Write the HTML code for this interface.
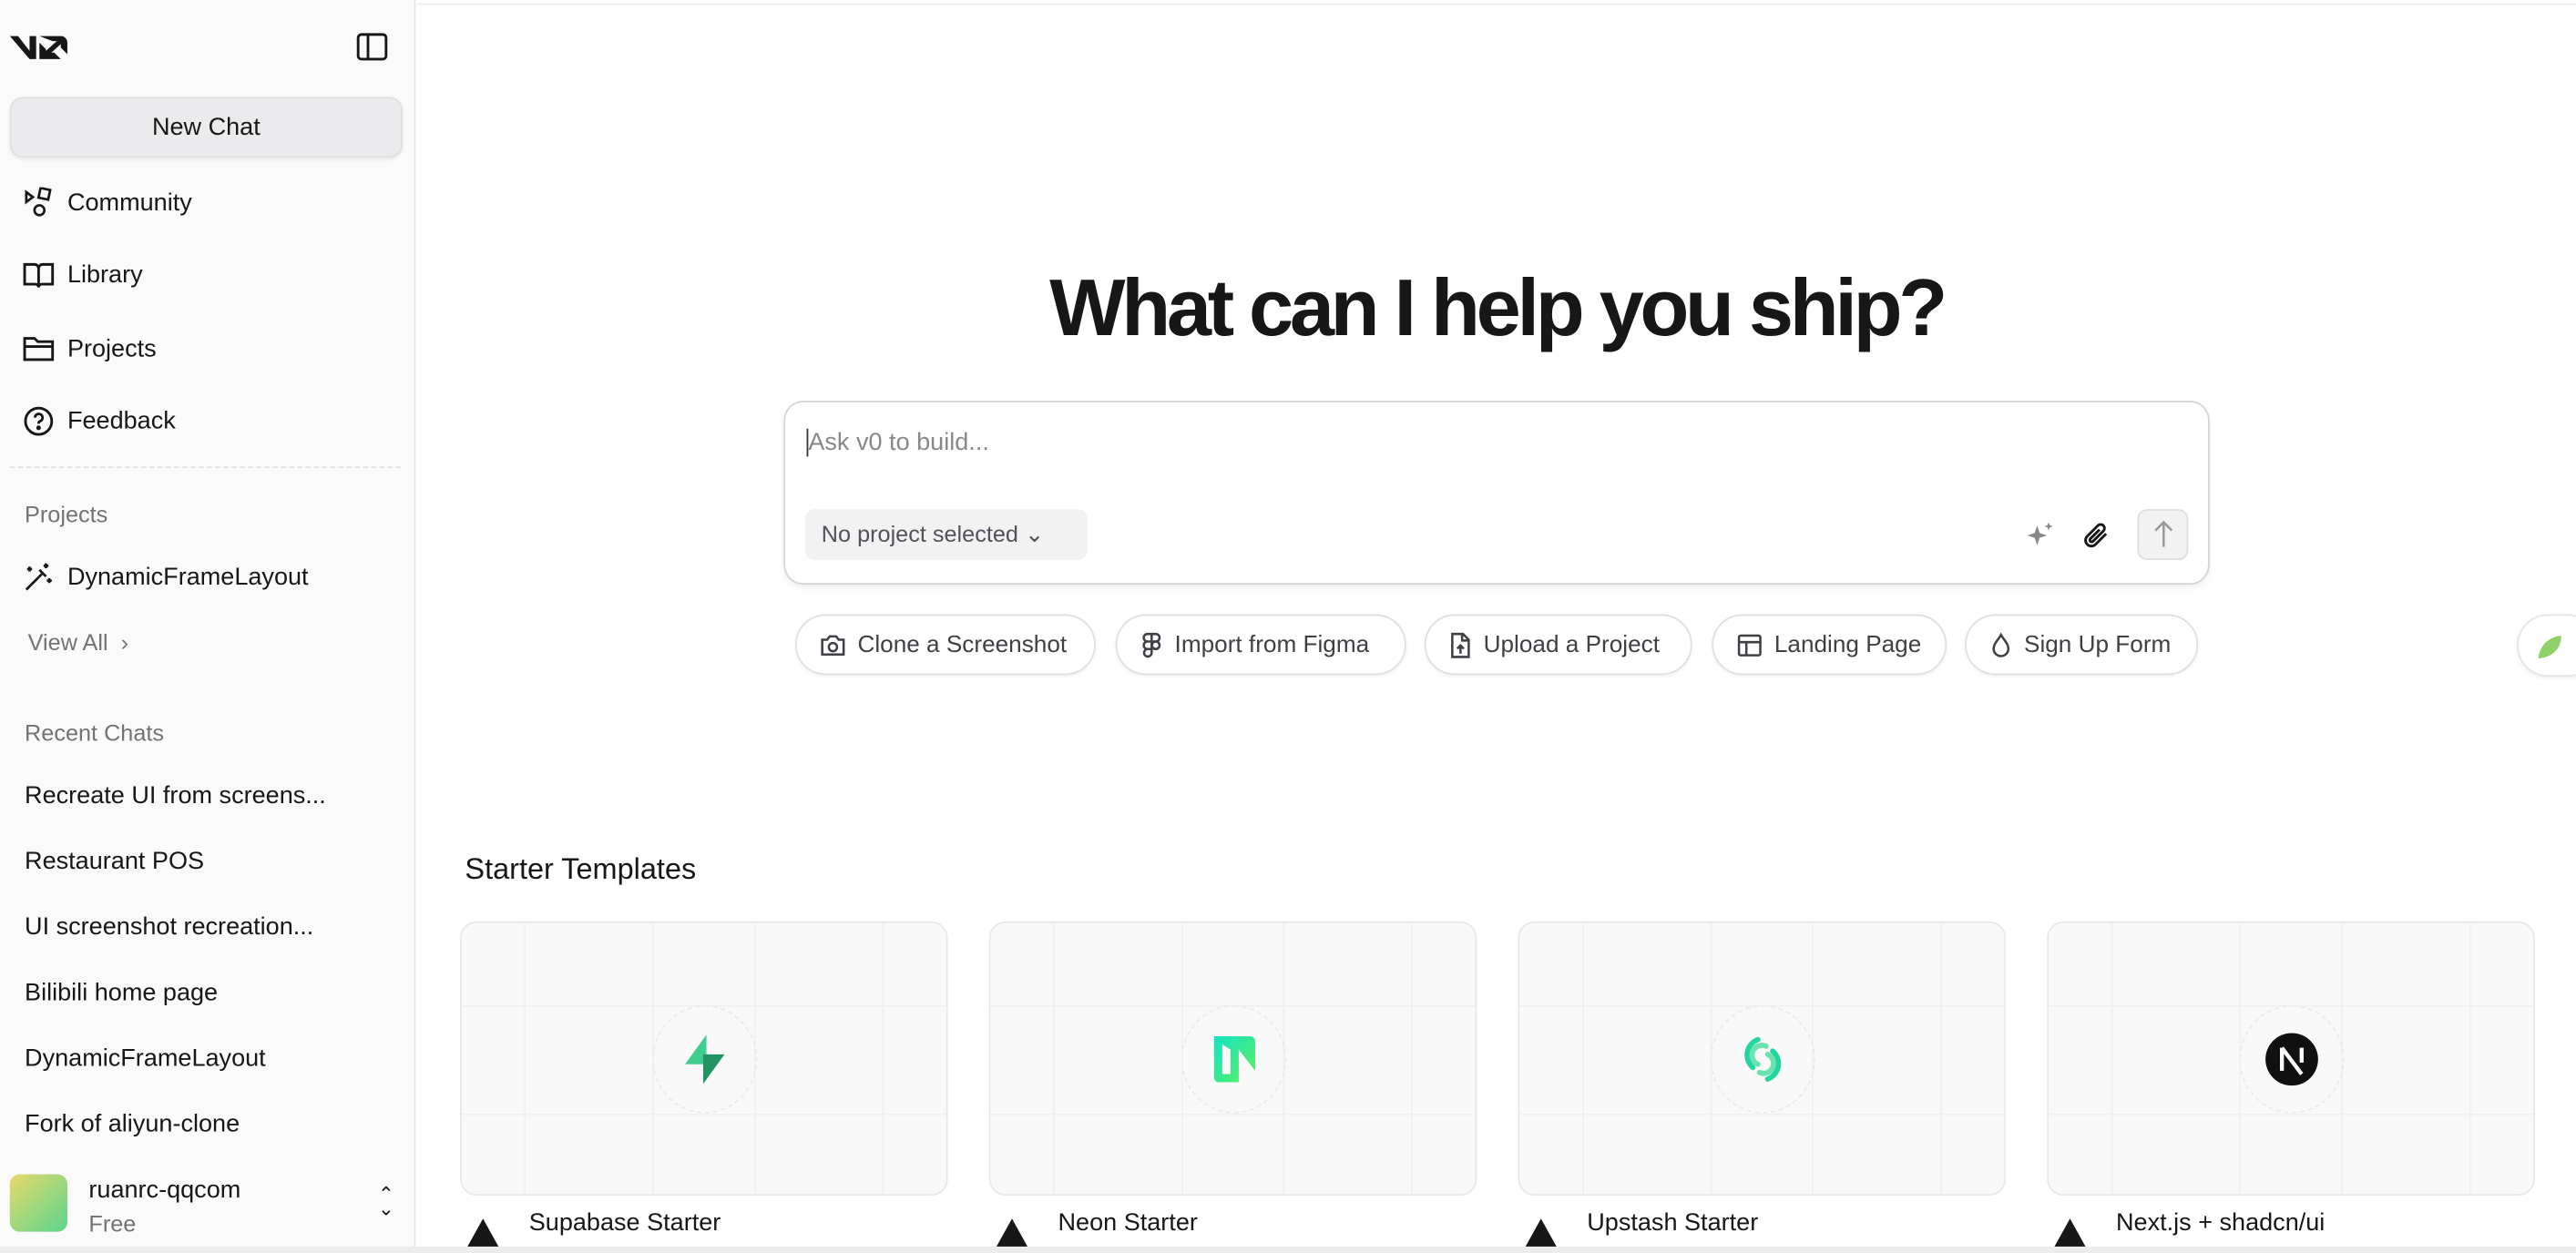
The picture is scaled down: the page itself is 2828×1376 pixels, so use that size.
<!DOCTYPE html>
<html><head><meta charset="utf-8"><style>
*{box-sizing:border-box;margin:0;padding:0}
html,body{width:2828px;height:1376px;overflow:hidden;background:#fff}
#w{width:1568px;height:763px;transform:scale(1.80357);transform-origin:0 0;position:relative;font-family:"Liberation Sans",sans-serif;color:#171717}
.sb{position:absolute;left:0;top:0;width:253px;height:763px;background:#fafafa;border-right:1px solid #e5e5e5}
.nav{position:absolute;left:14px;display:flex;align-items:center;font-size:15px;color:#171717}
.nav svg{margin-right:8px}
.t{position:absolute;left:15px;font-size:15px;color:#171717}
.g{color:#737373;font-size:14px}
.main{position:absolute;left:254px;top:2px;right:0;bottom:0;background:#fff;border-top:1px solid #eee}
.chip{position:absolute;top:374px;height:37px;border:1px solid #e0e0e0;border-radius:19px;display:flex;align-items:center;padding:0 14px;font-size:14.5px;color:#3f3f46;box-shadow:0 1px 2px rgba(0,0,0,.06);background:#fff}
.chip svg{margin-right:7px}
.card{position:absolute;top:561px;width:297px;height:167px;border:1px solid #e8e8e8;border-radius:10px;background:#f9f9fa;overflow:hidden;
background-image:linear-gradient(90deg,transparent 38px,#f0f0f0 38px,#f0f0f0 39px,transparent 39px),linear-gradient(90deg,transparent 116px,#f0f0f0 116px,#f0f0f0 117px,transparent 117px),linear-gradient(90deg,transparent 178px,#f0f0f0 178px,#f0f0f0 179px,transparent 179px),linear-gradient(90deg,transparent 256px,#f0f0f0 256px,#f0f0f0 257px,transparent 257px),linear-gradient(transparent 50px,#f0f0f0 50px,#f0f0f0 51px,transparent 51px),linear-gradient(transparent 116px,#f0f0f0 116px,#f0f0f0 117px,transparent 117px)}
.card .c{position:absolute;left:116px;top:50px;width:64px;height:66px;border:1px dashed #ebebeb;border-radius:50%;display:flex;align-items:center;justify-content:center}
.lbl{position:absolute;top:736px;font-size:15px;color:#171717}
.tri{position:absolute;top:742px;width:0;height:0;border-left:10px solid transparent;border-right:10px solid transparent;border-bottom:18px solid #171717}
</style></head><body><div id="w">
<div class="sb">
 <svg style="position:absolute;left:6px;top:19px" width="36" height="18" viewBox="0 0 36 18"><path d="M0 3h5l7 9V3h4v14h-4z" fill="#171717"/><path d="M18 3h13a4 4 0 0 1 4 4v7l-4-4V6h-5zM18 7v10h13l-4-4h-5V11z" fill="#171717"/><path d="M22 14L33 4" stroke="#171717" stroke-width="3"/></svg>
 <svg style="position:absolute;left:217px;top:20px" width="19" height="17" viewBox="0 0 19 17"><rect x="1" y="1" width="17" height="15" rx="2" fill="none" stroke="#171717" stroke-width="1.6"/><path d="M7 1v15" stroke="#171717" stroke-width="1.6"/></svg>
 <div style="position:absolute;left:6px;top:59px;width:239px;height:37px;border-radius:8px;background:#ebebed;border:1px solid #e0e0e0;box-shadow:0 1px 2px rgba(0,0,0,.08);text-align:center;line-height:36px;font-size:15px">New Chat</div>
 <div class="nav" style="top:114px"><svg width="19" height="19" viewBox="0 0 19 19" fill="none" stroke="#171717" stroke-width="1.5"><path d="M2 3l4 3-4 3z"/><rect x="10" y="1" width="6" height="6" transform="rotate(12 13 4)"/><circle cx="10" cy="14" r="3"/></svg>Community</div>
 <div class="nav" style="top:158px"><svg width="19" height="19" viewBox="0 0 19 19" fill="none" stroke="#171717" stroke-width="1.6"><path d="M1 3h6a2.5 2.5 0 0 1 2.5 2.5V17a2 2 0 0 0-2-2H1zM18 3h-6a2.5 2.5 0 0 0-2.5 2.5V17a2 2 0 0 1 2-2H18z"/></svg>Library</div>
 <div class="nav" style="top:203px"><svg width="19" height="19" viewBox="0 0 19 19" fill="none" stroke="#171717" stroke-width="1.6"><path d="M1 3h6l2 2h9v11H1zM1 8h17"/></svg>Projects</div>
 <div class="nav" style="top:247px"><svg width="19" height="19" viewBox="0 0 19 19" fill="none" stroke="#171717" stroke-width="1.6"><circle cx="9.5" cy="9.5" r="8"/><path d="M7.3 7.3a2.3 2.3 0 1 1 3 2.2c-.6.3-.8.7-.8 1.5"/><circle cx="9.5" cy="13.5" r=".6" fill="#171717"/></svg>Feedback</div>
 <div style="position:absolute;left:6px;right:8px;top:284px;border-top:1px dashed #e0e0e0"></div>
 <div class="t g" style="top:305px">Projects</div>
 <div class="nav" style="top:342px"><svg width="19" height="19" viewBox="0 0 19 19" fill="none" stroke="#171717" stroke-width="1.5"><path d="M2 17L12 7M10 5l4 4M14 1v3M12.5 2.5h3M4 3v3M2.5 4.5h3M16 10v3M14.5 11.5h3"/></svg>DynamicFrameLayout</div>
 <div class="t g" style="top:383px;left:17px">View All &nbsp;›</div>
 <div class="t g" style="top:438px">Recent Chats</div>
 <div class="t" style="top:476px">Recreate UI from screens...</div>
 <div class="t" style="top:516px">Restaurant POS</div>
 <div class="t" style="top:556px">UI screenshot recreation...</div>
 <div class="t" style="top:596px">Bilibili home page</div>
 <div class="t" style="top:636px">DynamicFrameLayout</div>
 <div class="t" style="top:676px">Fork of aliyun-clone</div>
 <div style="position:absolute;left:6px;top:715px;width:35px;height:35px;border-radius:6px;background:linear-gradient(135deg,#e8d86a,#5ad68e)"></div>
 <div class="t" style="top:716px;left:54px">ruanrc-qqcom</div>
 <div class="t g" style="top:737px;left:54px">Free</div>
 <div style="position:absolute;left:230px;top:723px;font-size:12px;line-height:9px;color:#171717">⌃<br>⌄</div>
</div>
<div class="main"></div>
<div style="position:absolute;left:254px;right:0;top:160px;text-align:center;font-size:49px;font-weight:bold;letter-spacing:-2.4px;color:#171717">What can I help you ship?</div>
<div style="position:absolute;left:477px;top:244px;width:868px;height:112px;border:1px solid #d4d4d4;border-radius:12px;box-shadow:0 2px 4px rgba(0,0,0,.06);background:#fff">
 <div style="position:absolute;left:13px;top:16px;font-size:15px;color:#888;border-left:1px solid #333">Ask v0 to build...</div>
 <div style="position:absolute;left:12px;top:65px;height:31px;width:172px;border-radius:6px;background:#f2f2f3;font-size:14px;color:#52525b;line-height:31px;padding-left:10px">No project selected ⌄</div>
 <svg style="position:absolute;left:755px;top:72px" width="18" height="18" viewBox="0 0 18 18" fill="#888"><path d="M7 3l1.5 4.5L13 9l-4.5 1.5L7 15l-1.5-4.5L1 9l4.5-1.5zM14 1l.7 1.8L16.5 3.5l-1.8.7L14 6l-.7-1.8L11.5 3.5l1.8-.7z"/></svg>
 <svg style="position:absolute;left:789px;top:71px" width="18" height="20" viewBox="0 0 18 20" fill="none" stroke="#171717" stroke-width="1.6"><path d="M15 9l-6.5 6.5a3.5 3.5 0 0 1-5-5L10 4a2.3 2.3 0 0 1 3.3 3.3L7 13.6a1.1 1.1 0 0 1-1.6-1.6L11 6.5"/></svg>
 <div style="position:absolute;left:823px;top:65px;width:31px;height:31px;border-radius:6px;background:#f2f2f3;border:1px solid #ddd;text-align:center"><svg width="16" height="29" viewBox="0 0 16 29" fill="none" stroke="#999" stroke-width="1.4"><path d="M8 22V7M3 12l5-5 5 5"/></svg></div>
</div>
<div class="chip" style="left:484px;width:183px"><svg width="16" height="16" viewBox="0 0 16 16" fill="none" stroke="#3f3f46" stroke-width="1.4"><path d="M1.5 4.5h3l1.5-2h4l1.5 2h3v9h-13z"/><circle cx="8" cy="9" r="2.5"/></svg>Clone a Screenshot</div>
<div class="chip" style="left:679px;width:177px"><svg width="14" height="16" viewBox="0 0 14 16" fill="none" stroke="#3f3f46" stroke-width="1.4"><path d="M7 1H4.5a2.3 2.3 0 0 0 0 4.6H7zM7 5.6H4.5a2.3 2.3 0 0 0 0 4.6H7zM7 1h2.5a2.3 2.3 0 0 1 0 4.6H7zM7 10.2H4.5a2.3 2.3 0 1 0 2.5 2.3z"/><circle cx="9.5" cy="7.9" r="2.3"/></svg>Import from Figma</div>
<div class="chip" style="left:867px;width:163px"><svg width="14" height="16" viewBox="0 0 14 16" fill="none" stroke="#3f3f46" stroke-width="1.4"><path d="M2 1h6.5L12 4.5V15H2zM8 1v4h4M7 8v5M5 10l2-2 2 2"/></svg>Upload a Project</div>
<div class="chip" style="left:1042px;width:143px"><svg width="16" height="16" viewBox="0 0 16 16" fill="none" stroke="#3f3f46" stroke-width="1.4"><rect x="1.5" y="2" width="13" height="12" rx="1"/><path d="M1.5 6h13M6 6v8"/></svg>Landing Page</div>
<div class="chip" style="left:1196px;width:142px"><svg width="14" height="16" viewBox="0 0 14 16" fill="none" stroke="#3f3f46" stroke-width="1.4"><path d="M7 1.5C5 5 2.5 7 2.5 10a4.5 4.5 0 0 0 9 0C11.5 7 9 5 7 1.5z"/></svg>Sign Up Form</div>
<div style="position:absolute;left:1532px;top:374px;width:50px;height:38px;border-radius:19px;border:1px solid #e5e5e5;background:#fff;box-shadow:0 1px 3px rgba(0,0,0,.08)"><svg style="position:absolute;left:10px;top:10px" width="18" height="18" viewBox="0 0 18 18"><path d="M2 16C3 8 8 3 16 2c0 8-5 13-14 14z" fill="#8fd16a"/></svg></div>
<div style="position:absolute;left:283px;top:519px;font-size:18px;color:#171717">Starter Templates</div>
<div class="card" style="left:280px"><div class="c"><svg width="34" height="34" viewBox="0 0 34 34"><path d="M18 2L5 20h13z" fill="#3ecf8e"/><path d="M16 32l13-18H16z" fill="#249361"/></svg></div></div>
<div class="card" style="left:602px"><div class="c"><svg width="32" height="34" viewBox="0 0 32 34"><defs><linearGradient id="n" x1="0" y1="0" x2="1" y2="1"><stop offset="0" stop-color="#12e3c6"/><stop offset="1" stop-color="#5ef05a"/></linearGradient></defs><path d="M4 3h22a3 3 0 0 1 3 3v18l-10-13v20H7a3 3 0 0 1-3-3zM9 8v18h5V11z" fill="url(#n)" fill-rule="evenodd"/></svg></div></div>
<div class="card" style="left:924px"><div class="c"><svg width="30" height="34" viewBox="0 0 30 34" fill="none" stroke="#23d5a0" stroke-width="3.2" stroke-linecap="round"><path d="M12 5a10 10 0 0 0-3 17M18 29a10 10 0 0 0 3-17"/><path d="M17 9a6 6 0 0 0-5 11M13 25a6 6 0 0 0 5-11" stroke="#6be3b0"/></svg></div></div>
<div class="card" style="left:1246px"><div class="c"><svg width="34" height="34" viewBox="0 0 34 34"><circle cx="17" cy="17" r="16" fill="#111"/><path d="M11 10v14M11 10l12 16M23 10v9" stroke="#fff" stroke-width="2.4"/></svg></div></div>
<div class="tri" style="left:284px"></div><div class="lbl" style="left:322px">Supabase Starter</div>
<div class="tri" style="left:606px"></div><div class="lbl" style="left:644px">Neon Starter</div>
<div class="tri" style="left:928px"></div><div class="lbl" style="left:966px">Upstash Starter</div>
<div class="tri" style="left:1250px"></div><div class="lbl" style="left:1288px">Next.js + shadcn/ui</div>
<div style="position:absolute;left:0;right:0;top:759px;height:4px;background:#ececec"></div>
</div></body></html>
